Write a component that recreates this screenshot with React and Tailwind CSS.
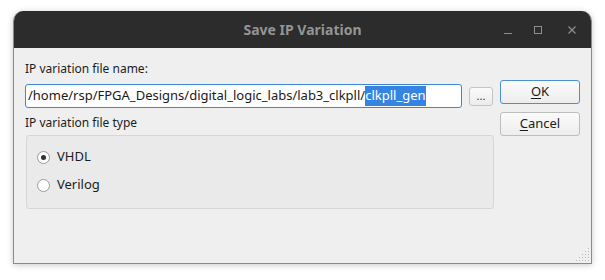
import React from 'react';

const font = { fontFamily: '"Noto Sans", "Open Sans", sans-serif' };

const WindowControls = () => (
  <div className="flex w-[97px] items-center h-full text-[#8e8e8e]">
    <svg width="10" height="10" viewBox="0 0 10 10" className="ml-[9px]">
      <path d="M1 8.5h8" stroke="currentColor" strokeWidth="1.2" />
    </svg>
    <svg width="10" height="10" viewBox="0 0 10 10" className="ml-[20px]">
      <rect x="1.5" y="1.5" width="7" height="7" fill="none" stroke="currentColor" strokeWidth="1" />
    </svg>
    <svg width="10" height="10" viewBox="0 0 10 10" className="ml-[24px]">
      <path d="M1.5 1.5l7 7M8.5 1.5l-7 7" stroke="currentColor" strokeWidth="1.2" />
    </svg>
  </div>
);

const Radio = ({ checked, label }) => (
  <div className="flex items-center h-[20px] gap-[7px]">
    <div className="w-[13px] h-[13px] rounded-full border border-[#9a9a9a] bg-white flex items-center justify-center">
      {checked && <div className="w-[5px] h-[5px] rounded-full bg-[#333]" />}
    </div>
    <span className="text-[13px] text-[#1c1c1c]">{label}</span>
  </div>
);

const Grip = () => {
  const dots = [];
  for (let r = 0; r < 5; r++) {
    for (let c = 0; c < 5; c++) {
      if (r + c >= 4) dots.push(<rect key={`${r}-${c}`} x={c * 3} y={r * 3} width="1" height="1" fill="#b8b8b8" />);
    }
  }
  return (
    <svg width="14" height="14" viewBox="0 0 14 14" className="self-end mr-[1px] mb-[1px]">
      {dots}
    </svg>
  );
};

export default function App() {
  return (
    <div className="w-[605px] h-[280px] bg-white pt-[11px] pl-[13px]" style={font}>
      <div className="w-[579px] h-[253px] rounded-t-[10px] overflow-hidden flex flex-col bg-[#efefef] border-x border-b border-[#8a8a8a] shadow-[0_1px_6px_rgba(0,0,0,0.22)]">
        <div className="h-[37px] bg-[#2c2c2c] flex items-center shrink-0">
          <div className="w-[97px]" />
          <div className="flex-1 text-center text-[14px] font-bold text-[#949494]">Save IP Variation</div>
          <WindowControls />
        </div>

        <div className="flex-1 flex flex-col">
          <div className="flex pl-[11px] pt-[13px]">
            <div className="w-[469px] flex flex-col">
              <div className="text-[12px] leading-[16px] text-[#1c1c1c]">IP variation file name:</div>
              <div className="flex items-center mt-[7px] gap-[7px]">
                <div className="w-[437px] h-[24px] rounded-[3px] border border-[#3b87d4] bg-white flex items-center pl-[2px] text-[13px] text-[#1a1a1a] whitespace-nowrap overflow-hidden">
                  <span>/home/rsp/FPGA_Designs/digital_logic_labs/lab3_clkpll/</span>
                  <span className="bg-[#3584e4] text-white">clkpll_gen</span>
                </div>
                <button className="w-[24px] h-[19px] rounded-[3px] border border-[#c4c4c4] bg-gradient-to-b from-[#fafafa] to-[#ececec] text-[11px] leading-none text-[#333] flex items-center justify-center pb-[2px]">
                  ...
                </button>
              </div>
              <div className="text-[12px] leading-[16px] text-[#1c1c1c] mt-[7px]">IP variation file type</div>
              <div className="ml-[1px] mt-[4px] w-[468px] h-[74px] rounded-[3px] border border-[#d6d6d6] bg-[#eaeaea] pl-[10px] pt-[11px] flex flex-col gap-[8px]">
                <Radio checked label="VHDL" />
                <Radio label="Verilog" />
              </div>
            </div>

            <div className="ml-[6px] w-[80px] flex flex-col mt-[19px] gap-[8px]">
              <button className="h-[24px] rounded-[3px] border border-[#4a8fd3] bg-gradient-to-b from-[#fbfbfb] to-[#ededed] text-[13px] text-[#1c1c1c]">
                <span className="underline underline-offset-2">O</span>K
              </button>
              <button className="h-[24px] rounded-[3px] border border-[#bdbdbd] bg-gradient-to-b from-[#fbfbfb] to-[#ededed] text-[13px] text-[#1c1c1c]">
                <span className="underline underline-offset-2">C</span>ancel
              </button>
            </div>
          </div>
          <div className="flex-1" />
          <Grip />
        </div>
      </div>
    </div>
  );
}
